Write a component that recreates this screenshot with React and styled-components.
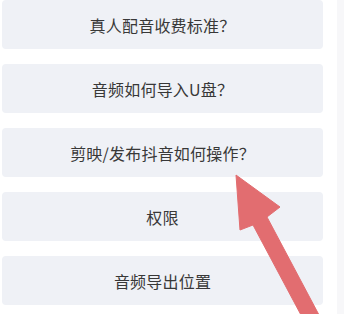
import React from 'react';
import styled, { createGlobalStyle } from 'styled-components';

const GlobalStyle = createGlobalStyle`
  html, body {
    margin: 0;
    padding: 0;
    background: #ffffff;
  }
  body {
    font-family: "Noto Sans CJK SC", "Noto Sans", sans-serif;
  }
`;

const Page = styled.div`
  position: relative;
  display: flex;
  width: 344px;
  height: 314px;
  overflow: hidden;
  padding-left: 2px;
  box-sizing: border-box;
`;

const List = styled.div`
  width: 321px;
  display: flex;
  flex-direction: column;
  gap: 15px;
`;

const Gutter = styled.div`
  flex: 1;
`;

const Edge = styled.div`
  width: 7px;
  background: #f7f7f9;
`;

const Item = styled.div`
  height: 49px;
  flex-shrink: 0;
  display: flex;
  align-items: center;
  justify-content: center;
  background: #eff1f6;
  border-radius: 4px;
  color: #383838;
  font-size: 16px;
  letter-spacing: 0.2px;
`;

const Pointer = styled.svg`
  position: absolute;
  left: 0;
  top: 0;
  pointer-events: none;
`;

const questions = [
  '真人配音收费标准？',
  '音频如何导入U盘？',
  '剪映/发布抖音如何操作？',
  '权限',
  '音频导出位置',
];

const App = () => (
  <>
    <GlobalStyle />
    <Page>
      <List>
        {questions.map(q => (
          <Item key={q}>{q}</Item>
        ))}
      </List>
      <Gutter />
      <Edge />
      <Pointer width="344" height="314" viewBox="0 0 344 314">
        <polygon
          points="236,175 280,207 267,217 327,330 309,330 253,225 240,230"
          fill="#e26d70"
          stroke="#e26d70"
          strokeWidth="1"
          strokeLinejoin="round"
        />
      </Pointer>
    </Page>
  </>
);

export default App;
